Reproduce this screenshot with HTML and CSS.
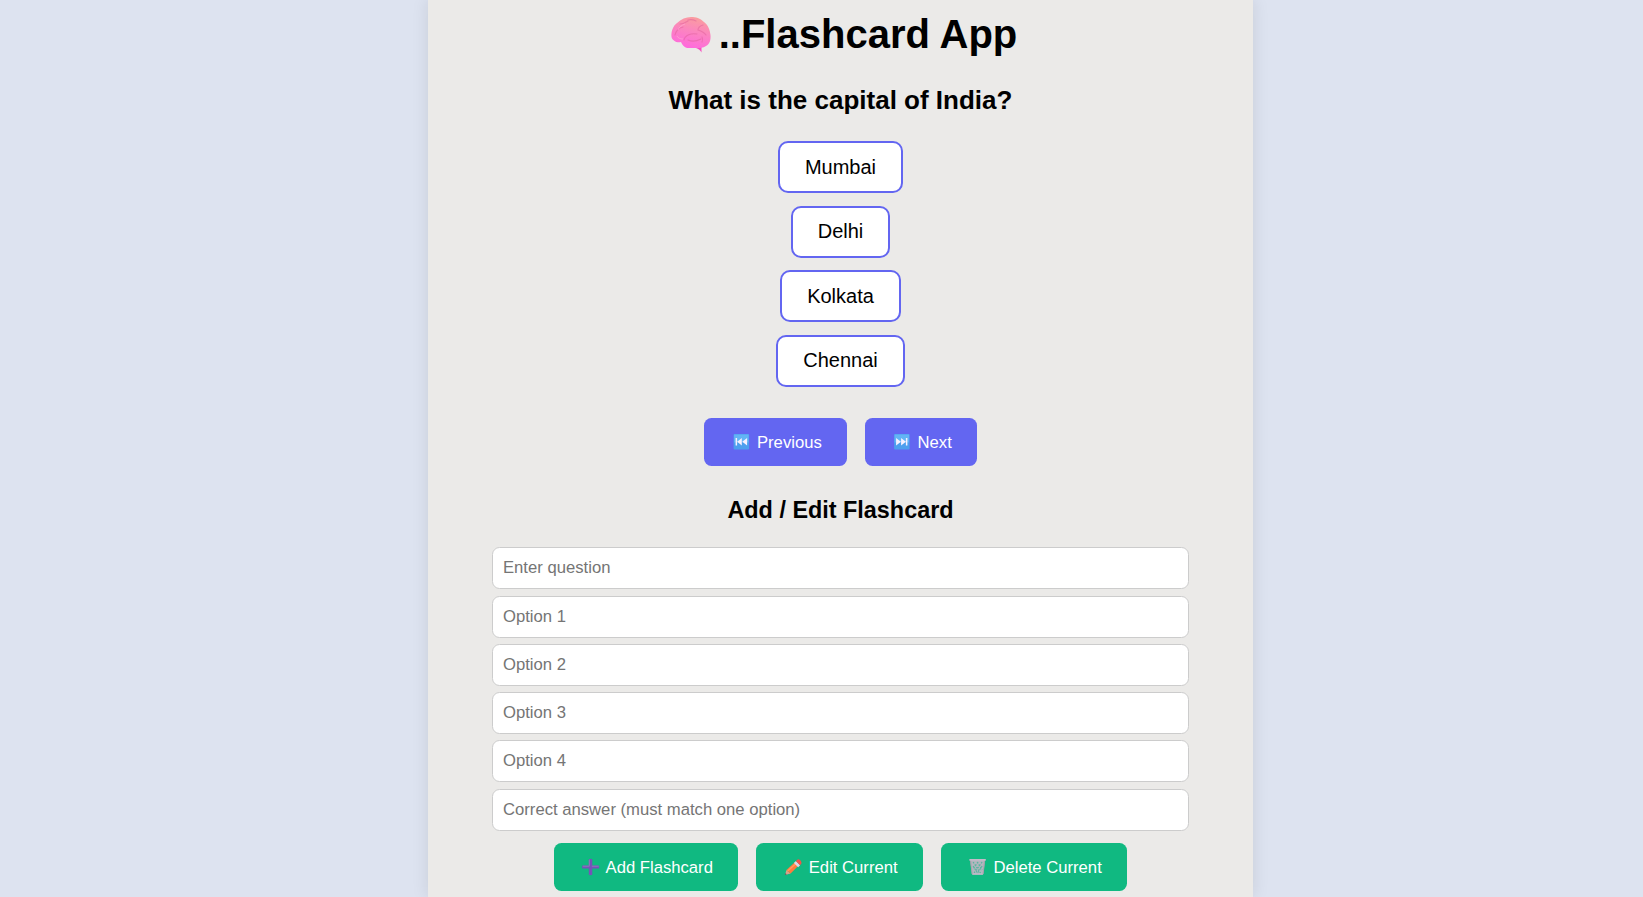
FILE: index.html
```html
<!DOCTYPE html>
<html lang="en">
<head>
<meta charset="utf-8">
<title>Flashcard App</title>
<link rel="stylesheet" href="styles.css">
</head>
<body>
<main class="container">
  <h1 class="title"><svg class="brain" viewBox="0 0 40 36" aria-hidden="true">
    <defs>
      <linearGradient id="brainFill" x1=".7" y1="0" x2=".4" y2="1"><stop offset="0" stop-color="#fa9f9c"/><stop offset=".45" stop-color="#fb86be"/><stop offset="1" stop-color="#ff69de"/></linearGradient>
    </defs>
    <path d="M25 30h5.500v5.500c-1-2.500-3-3.500-5.500-4.500z" fill="#f84fc0"/>
    <path d="M.5 20C0 14 2 9 6 6c4-4 9-6 14-6 5 0 9 1 13 5 4 3 6 8 6.500 13 .5 5-1 9-4.500 11-3 2-6 2-10 2h-7c-4 0-6-2-8-6C6 26 1.500 24 .5 20z" fill="url(#brainFill)"/>
    <g fill="none" stroke="#e0609a" stroke-opacity=".5" stroke-width="1.100" stroke-linecap="round"><path d="M4 18c1-5 4-7 8-8M9 7c3 0 5-1 8-3M17 3c3-1 6 0 8 1M32 8c-3 1-5 3-5 5 3 1 6 2 8 5"/><path d="M13 23c1-5 7-7 13-6M17 23c4 2 9 1 13-1M31 25c1-2 1-3 0-5"/></g>
    <path d="M12 22c-3 0-5-1-6-3M14 7c-3 1-6 3-7 6" fill="none" stroke="#ffa6d2" stroke-opacity=".7" stroke-width="1"/>
  </svg>..Flashcard App</h1>
  <h2 class="question">What is the capital of India?</h2>
  <div class="options">
    <button class="option">Mumbai</button>
    <button class="option">Delhi</button>
    <button class="option">Kolkata</button>
    <button class="option">Chennai</button>
  </div>
  <div class="row nav">
    <button class="btn"><svg class="icon" viewBox="0 0 23 18" aria-hidden="true"><rect x="4.500" y="1" width="15.500" height="15.500" rx="1" fill="#4d9fee"/><rect x="5" y="1.500" width="14.500" height="8" fill="#63b4f5"/><path d="M6.500 5H8v7.500H6.500zM12.700 5v7.500L8.100 8.750zM18 5v7.500l-4.800-3.750z" fill="#f6f1ff"/></svg> Previous</button>
    <button class="btn"><svg class="icon" viewBox="0 0 23 18" aria-hidden="true"><rect x="4" y="1" width="15.500" height="15.500" rx="1" fill="#4d9fee"/><rect x="4.500" y="1.500" width="14.500" height="8" fill="#63b4f5"/><path d="M6 5v7.500l4.800-3.750zM11 5v7.500l4.800-3.750zM15.800 5h1.500v7.500h-1.500z" fill="#f6f1ff"/></svg> Next</button>
  </div>
  <h3 class="form-title">Add / Edit Flashcard</h3>
  <div class="form">
    <input class="field" placeholder="Enter question">
    <input class="field" placeholder="Option 1">
    <input class="field" placeholder="Option 2">
    <input class="field" placeholder="Option 3">
    <input class="field" placeholder="Option 4">
    <input class="field" placeholder="Correct answer (must match one option)">
  </div>
  <div class="row">
    <button class="btn green"><svg class="icon plus" viewBox="0 0 23 18" aria-hidden="true"><path d="M10 1.200q2-1 3.500 0v6.300h6.700q1 1.500 0 3h-6.700v6.300q-1.500 1-3.500 0v-6.300H3.500q-1-1.500 0-3H10z" fill="#7653b8"/><path d="M10.500 1.500v6.700H4M13 8.200h7" fill="none" stroke="#8f7abb"/></svg> Add Flashcard</button>
    <button class="btn green"><svg class="icon" viewBox="0 0 23 18" aria-hidden="true"><path d="M4 17l1.300-5L9.500 15.500z" fill="#d7a38b"/><path d="M5.300 12L14 4l3.500 3.500-8 8z" fill="#ff7b3e"/><path d="M6.500 13L15.500 5" stroke="#ff9b62" stroke-width="1.500"/><path d="M12.800 5l2-2L19 7.300l-2 2z" fill="#dfd7e7"/><path d="M14.800 3l2-1.800q3 0 3.700 3.800L19 7.300z" fill="#f65149"/><path d="M4 17l.4-1.800L5.600 16.300z" fill="#483c48"/></svg> Edit Current</button>
    <button class="btn green"><svg class="icon" viewBox="0 0 23 18" aria-hidden="true"><path d="M4 1.500h15l-2 15H6z" fill="#b3b6be"/><path d="M7 4l8 12M11 4l5 8M16 4L8 15M12 4l-5 7M7 8l5 8M16 8l-5 8" stroke="#5ab5a0" stroke-width="1.200" stroke-dasharray="1.700 1.300"/><path d="M3.300 1.800h16.400M6.300 16h10.500" stroke="#c4bac9" stroke-width="1.700"/><path d="M4.500 3L6 16M18.500 3L17 16" stroke="#aaa0ae"/></svg> Delete Current</button>
  </div>
</main>
</body>
</html>
```
FILE: styles.css
```css
* { box-sizing: border-box; }

body {
  margin: 0;
  height: 897px;
  overflow: hidden;
  background: #dde3f0;
  font-family: Arial, "Liberation Sans", sans-serif;
  color: #000;
}

.container {
  width: 825px;
  height: 897px;
  margin-left: 428px;
  padding: 11px 64px 0;
  background: #ebeae8;
  box-shadow: 0 0 16px rgba(0, 0, 0, 0.1);
  clip-path: inset(0 -20px);
  text-align: center;
}

.title {
  margin: 0;
  font-size: 40px;
  line-height: 46px;
}

.brain {
  width: 40px;
  height: 36px;
  margin: 0 7.3px 0 7.7px;
  vertical-align: -5px;
}

.question {
  margin: 28px 0 0;
  font-size: 26px;
  line-height: 30px;
}

.options {
  display: flex;
  flex-direction: column;
  align-items: center;
  gap: 12.5px;
  margin-top: 26.2px;
}

.option {
  height: 52px;
  padding: 0 25px;
  border: 2px solid #6366f1;
  border-radius: 10px;
  background: #fff;
  color: #000;
  font: 20px/23px Arial, "Liberation Sans", sans-serif;
}

.row {
  display: flex;
  justify-content: center;
  gap: 18px;
}

.nav { margin-top: 31.3px; }

.btn {
  height: 48px;
  padding: 2px 25px 0;
  border: 0;
  border-radius: 7.5px;
  background: #6366f1;
  color: #fff;
  font: 16.667px/19px Arial, "Liberation Sans", sans-serif;
  white-space: nowrap;
}

.green { background: #10b981; }

.icon {
  width: 23.2px;
  height: 18px;
  vertical-align: -3px;
}

.plus { width: 22.6px; }

.form-title {
  margin: 31px 0 0;
  font-size: 23.4px;
  line-height: 27px;
}

.form {
  display: flex;
  flex-direction: column;
  gap: 6.25px;
  margin-top: 23.4px;
  margin-bottom: 12.1px;
}

.field {
  width: 697px;
  height: 42px;
  padding: 0 10px;
  border: 1px solid #ccc;
  border-radius: 7.5px;
  background: #fff;
  font: 16.667px Arial, "Liberation Sans", sans-serif;
}

.field::placeholder { color: #757575; }
```
